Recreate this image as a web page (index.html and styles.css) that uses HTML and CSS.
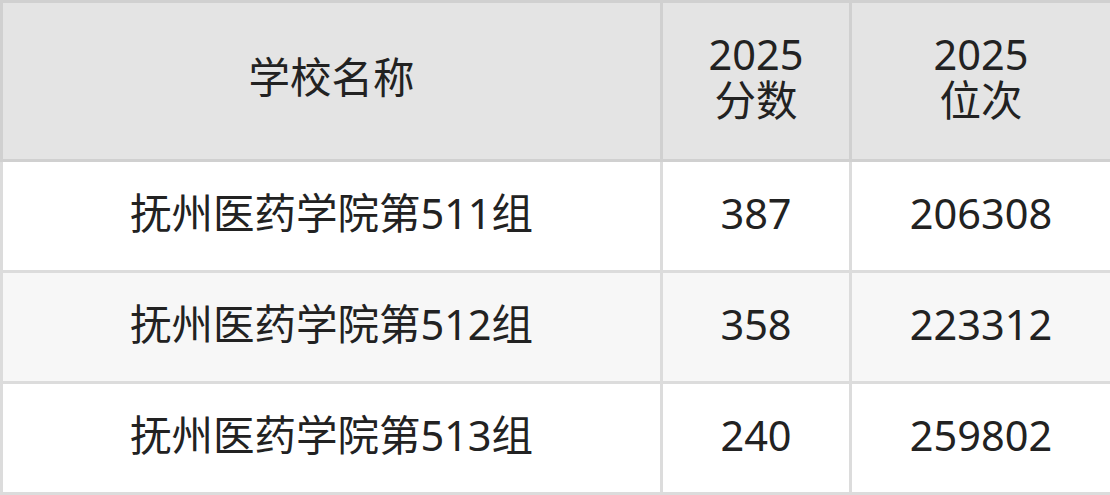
FILE: index.html
```html
<!DOCTYPE html>
<html lang="zh-CN">
<head>
<meta charset="utf-8">
<link rel="stylesheet" href="styles.css">
</head>
<body>
<table class="score-table">
  <colgroup>
    <col class="c-name">
    <col class="c-score">
    <col class="c-rank">
  </colgroup>
  <thead>
    <tr>
      <th>学校名称</th>
      <th>2025<br>分数</th>
      <th>2025<br>位次</th>
    </tr>
  </thead>
  <tbody>
    <tr>
      <td>抚州医药学院第511组</td>
      <td>387</td>
      <td>206308</td>
    </tr>
    <tr class="alt">
      <td>抚州医药学院第512组</td>
      <td>358</td>
      <td>223312</td>
    </tr>
    <tr>
      <td>抚州医药学院第513组</td>
      <td>240</td>
      <td>259802</td>
    </tr>
  </tbody>
</table>
</body>
</html>
```

FILE: styles.css
```css
html, body {
  margin: 0;
  padding: 0;
  background: #ffffff;
}
.score-table {
  width: 1110px;
  border-collapse: collapse;
  table-layout: fixed;
  font-family: "Noto Sans", "Noto Sans CJK SC", sans-serif;
  font-size: 41.5px;
  color: #222222;
}
.c-name { width: 660px; }
.c-score { width: 189px; }
.c-rank { width: 261px; }
.score-table th,
.score-table td {
  border: 3px solid #dcdcdc;
  text-align: center;
  vertical-align: middle;
  padding: 0;
  font-weight: 400;
}
.score-table th {
  background: #e4e4e4;
  border-color: #d0d0d0;
  height: 148px;
  padding-bottom: 8px;
  line-height: 46px;
}
.score-table td {
  height: 102px;
  padding-bottom: 6px;
  line-height: 50px;
}
.score-table tr.alt td {
  background: #f7f7f7;
}
```
